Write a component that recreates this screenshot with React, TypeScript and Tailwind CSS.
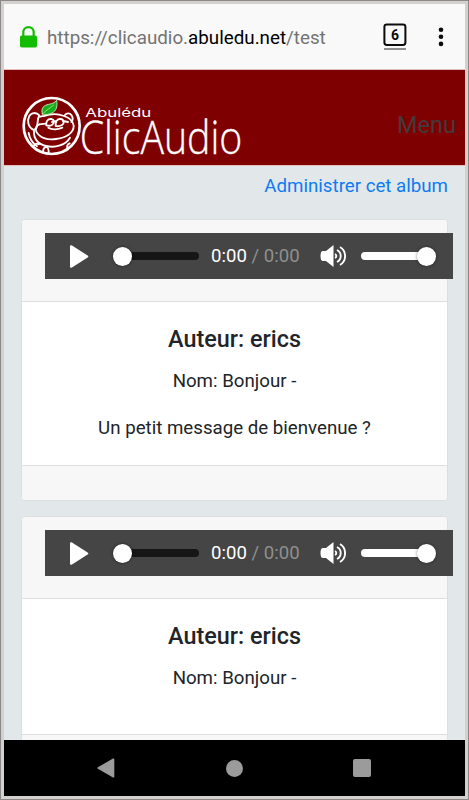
interface Album {
  id: number;
  author: string;
  name: string;
  message?: string;
}

const albums: Album[] = [
  { id: 1, author: "erics", name: "Bonjour -", message: "Un petit message de bienvenue ?" },
  { id: 2, author: "erics", name: "Bonjour -" },
];

function BrowserBar() {
  return (
    <div className="h-[65px] shrink-0 bg-[#f9f9f9] flex items-center pl-4 pr-[21px]">
      <svg width="17" height="22" viewBox="0 0 17 22" className="shrink-0">
        <path d="M3.3 10V6.3a5.2 5.2 0 0 1 10.4 0V10" fill="none" stroke="#12bc00" strokeWidth="2.2" />
        <rect x="0" y="9.5" width="17" height="12" rx="1.8" fill="#12bc00" />
      </svg>
      <div className="ml-[10px] pt-[3px] text-[18.8px] text-[#737373] whitespace-nowrap">
        https://clicaudio.<span className="text-black">abuledu.net</span>/test
      </div>
      <svg width="24" height="28" viewBox="0 0 24 28" className="ml-auto shrink-0">
        <rect x="1.4" y="1.4" width="21" height="20.6" rx="2.4" fill="none" stroke="#0c0c0d" strokeWidth="2" />
        <path d="M1 26h22" stroke="#555" strokeWidth="1.3" />
        <text x="12" y="16.6" textAnchor="middle" fontSize="14" fontWeight="700" fill="#0c0c0d">6</text>
      </svg>
      <svg width="6" height="20" viewBox="0 0 6 20" className="ml-[31px] shrink-0" fill="#0c0c0d">
        <circle cx="3" cy="2.7" r="2.3" />
        <circle cx="3" cy="9.8" r="2.3" />
        <circle cx="3" cy="16.9" r="2.3" />
      </svg>
    </div>
  );
}

function Logo() {
  return (
    <svg width="225" height="75" viewBox="30 24 675 225" fill="none" stroke="#fff" strokeLinecap="round" strokeLinejoin="round" className="mt-[26px] overflow-visible">
      <circle cx="125" cy="123" r="84" strokeWidth="8" />
      <g strokeWidth="5.5">
        {/* Ears */}
        <path d="M88 91c-9-10-24-9-30 2-8 15-3 34 11 41 7 2 10-3 12-10 3-12 1-23 7-33z" />
        <path d="M164 91c4-7 15-8 20-1 5 7 4 16 0 21" />
        {/* Face */}
        <path d="M90 95c5-3 9-1 13-2 17-6 41-7 59 0 15 5 27 15 29 29" />
        <path d="M88 118c-10 4-13 13-9 22 9 18 33 26 59 22 30-4 53-18 53-38" />
        <path d="M72 138c-1 24 12 39 36 45 29 7 59-3 72-25" />
        <path d="M56 144c3 17 12 31 25 40M99 203c0-11 3-17 10-17 5 0 7 6 7 18M174 193c-5-8-3-15 5-18M72 181c5-6 10-6 15-3" />
        {/* Glasses */}
        <path d="M109 121c-2-12 5-20 15-19 9 1 11 11 3 17-5 3-12 4-18 2z" />
        <path d="M137 123c-2-13 5-22 15-21 10 1 12 13 4 18-6 3-13 5-19 3zM126 111c5-3 10-3 13 0" />
        <path d="M88 118l20-2M159 108l15 3M115 128c9 6 27 7 42 0" />
      </g>
      <path d="M97 87c-5-19 5-26 19-29 12-2 18-5 24-12 3 18-1 32-14 38-9 5-20 6-29 3z" fill="#18ad1c" stroke="#d7f5cf" strokeWidth="2.5" />
      <path d="M101 84c9-9 17-14 29-23" stroke="#8be070" strokeWidth="3" />
      <text x="226" y="95" fontSize="36" textLength="198" lengthAdjust="spacingAndGlyphs" fill="#fff" stroke="none" className="font-['Inter']">
        Abulédu
      </text>
      <text x="209" y="208" fontSize="139" textLength="488" lengthAdjust="spacingAndGlyphs" fill="#fff" stroke="#fff" strokeWidth="1" className="font-['Open_Sans'] font-light">
        ClicAudio
      </text>
    </svg>
  );
}

function AudioPlayer() {
  return (
    <div className="w-[408px] h-[46px] bg-[#454545] flex items-center text-white">
      <svg width="19" height="23" viewBox="0 0 19 23" fill="#fff" className="ml-[25px] shrink-0">
        <path d="M0 1.6C0 .4 1 0 2 .6l15.6 9.8c1 .6 1 1.6 0 2.2L2 22.4c-1 .6-2 .2-2-1z" />
      </svg>
      {/* Progress */}
      <div className="ml-6 w-[86px] h-5 shrink-0 flex items-center">
        <div className="size-[19px] shrink-0 rounded-full bg-white shadow-[0_0_3px_rgba(0,0,0,0.6)] z-10" />
        <div className="-ml-2 h-2 grow rounded-full bg-[#161616]" />
      </div>
      <div className="ml-3 w-[90px] shrink-0 pt-[2px] text-[18.6px] whitespace-nowrap">
        0:00<span className="text-[#8f8f8f]"> / 0:00</span>
      </div>
      <svg width="26" height="22" viewBox="0 0 26 22" className="ml-[19px] shrink-0">
        <path d="M2.500 6H6l7.500-6v22L6 16H2.500Q.5 15.500.5 11T2.500 6z" fill="#fff" />
        <path d="M15 9a2.200 2.200 0 0 1 0 4M17 5a6.700 6.700 0 0 1 0 12M20 2a10.500 10.500 0 0 1 0 18" fill="none" stroke="#fff" strokeWidth="1.900" />
      </svg>
      {/* Volume */}
      <div className="ml-[15px] w-[75px] h-5 shrink-0 flex items-center">
        <div className="-mr-2 h-2 grow rounded-full bg-white" />
        <div className="size-[19px] shrink-0 rounded-full bg-white shadow-[0_0_3px_rgba(0,0,0,0.5)]" />
      </div>
    </div>
  );
}

function AlbumCard({ album }: { album: Album }) {
  return (
    <div className="shrink-0 rounded-[4px] border border-[#dcdfe0] bg-white">
      <div className="h-[82px] rounded-t-[4px] bg-[#f7f7f7] border-b border-[#dfdfdf] pt-[13px] pl-[23px]">
        <AudioPlayer />
      </div>
      <div className={`text-center text-[#212529] ${album.message ? "h-[163px]" : "h-[135px]"}`}>
        <h2 className="pt-[23px] text-[23.4px] leading-7 font-medium">Auteur: {album.author}</h2>
        <p className="mt-[14px] text-[18.7px] leading-7">Nom: {album.name}</p>
        {album.message && <p className="mt-[19px] text-[18.7px] leading-7">{album.message}</p>}
      </div>
      <div className="h-[35px] rounded-b-[4px] bg-[#f7f7f7] border-t border-[#dfdfdf]" />
    </div>
  );
}

function NavBar() {
  return (
    <div className="h-14 shrink-0 bg-black flex items-center justify-between pl-[93px] pr-[94px]">
      <svg width="18" height="20" viewBox="0 0 18 20" fill="#9b9b9b">
        <path d="M16 .6c.8-.5 1.300-.1 1.300.7v17.400c0 .8-.5 1.200-1.300.7L.9 10.800c-.8-.5-.8-1.100 0-1.600z" />
      </svg>
      <div className="size-[17px] rounded-full bg-[#9b9b9b]" />
      <div className="size-[18px] rounded-[2px] bg-[#9b9b9b]" />
    </div>
  );
}

export default function App() {
  return (
    <div className="w-[469px] h-[800px] border border-[#8b8888] bg-[#d4d0d0] p-[3px] font-['Roboto',sans-serif]">
      <div className="w-[461px] h-[792px] flex flex-col overflow-hidden">
        <BrowserBar />
        <header className="h-[97px] shrink-0 bg-[#7f0000] border-y border-[#e3bcbc] flex items-center justify-between pl-4 pr-[9px]">
          <Logo />
          <span className="-ml-4 mt-4 text-[23.5px] text-[#433b3b]">Menu</span>
        </header>
        <main className="grow min-h-0 overflow-hidden bg-[#e2e7ea] px-[17px] flex flex-col">
          <a className="mt-[6px] mb-[19px] h-7 shrink-0 self-end text-[18.7px] leading-7 text-[#0d7cf2]">
            Administrer cet album
          </a>
          <div className="flex flex-col gap-[15px]">
            {albums.map((album) => (
              <AlbumCard key={album.id} album={album} />
            ))}
          </div>
        </main>
        <NavBar />
      </div>
    </div>
  );
}
